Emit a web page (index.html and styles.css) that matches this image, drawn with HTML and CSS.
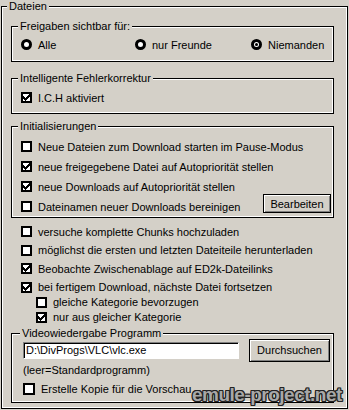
FILE: index.html
```html
<!DOCTYPE html>
<html>
<head>
<meta charset="utf-8">
<link rel="stylesheet" href="styles.css">
</head>
<body>
<div class="outer">
  <div class="legend legend-outer">Dateien</div>

  <div class="group g1">
    <div class="legend">Freigaben sichtbar für:</div>
    <div class="radios">
      <div class="opt"><span class="radio"></span>Alle</div>
      <div class="opt"><span class="radio"></span>nur Freunde</div>
      <div class="opt"><span class="radio on"></span>Niemanden</div>
    </div>
  </div>

  <div class="group g2">
    <div class="legend">Intelligente Fehlerkorrektur</div>
    <div class="row first"><span class="cb on"><svg viewBox="0 0 7 7" width="7" height="7"><polygon points="0,2 1,2 1,3 2,3 2,4 3,4 3,3 4,3 4,2 5,2 5,1 6,1 6,0 7,0 7,3 6,3 6,4 5,4 5,5 4,5 4,6 3,6 3,7 2,7 2,6 1,6 1,5 0,5"/></svg></span>I.C.H aktiviert</div>
  </div>

  <div class="group g3">
    <div class="legend">Initialisierungen</div>
    <div class="rows">
      <div class="row"><span class="cb"></span>Neue Dateien zum Download starten im Pause-Modus</div>
      <div class="row"><span class="cb on"><svg viewBox="0 0 7 7" width="7" height="7"><polygon points="0,2 1,2 1,3 2,3 2,4 3,4 3,3 4,3 4,2 5,2 5,1 6,1 6,0 7,0 7,3 6,3 6,4 5,4 5,5 4,5 4,6 3,6 3,7 2,7 2,6 1,6 1,5 0,5"/></svg></span>neue freigegebene Datei auf Autopriorität stellen</div>
      <div class="row"><span class="cb on"><svg viewBox="0 0 7 7" width="7" height="7"><polygon points="0,2 1,2 1,3 2,3 2,4 3,4 3,3 4,3 4,2 5,2 5,1 6,1 6,0 7,0 7,3 6,3 6,4 5,4 5,5 4,5 4,6 3,6 3,7 2,7 2,6 1,6 1,5 0,5"/></svg></span>neue Downloads auf Autopriorität stellen</div>
      <div class="row"><span class="cb"></span>Dateinamen neuer Downloads bereinigen<span class="btn btn-edit">Bearbeiten</span></div>
    </div>
  </div>

  <div class="free">
    <div class="row"><span class="cb"></span>versuche komplette Chunks hochzuladen</div>
    <div class="row"><span class="cb"></span>möglichst die ersten und letzten Dateiteile herunterladen</div>
    <div class="row"><span class="cb on"><svg viewBox="0 0 7 7" width="7" height="7"><polygon points="0,2 1,2 1,3 2,3 2,4 3,4 3,3 4,3 4,2 5,2 5,1 6,1 6,0 7,0 7,3 6,3 6,4 5,4 5,5 4,5 4,6 3,6 3,7 2,7 2,6 1,6 1,5 0,5"/></svg></span>Beobachte Zwischenablage auf ED2k-Dateilinks</div>
    <div class="row"><span class="cb on"><svg viewBox="0 0 7 7" width="7" height="7"><polygon points="0,2 1,2 1,3 2,3 2,4 3,4 3,3 4,3 4,2 5,2 5,1 6,1 6,0 7,0 7,3 6,3 6,4 5,4 5,5 4,5 4,6 3,6 3,7 2,7 2,6 1,6 1,5 0,5"/></svg></span>bei fertigem Download, nächste Datei fortsetzen</div>
    <div class="row sub"><span class="cb"></span>gleiche Kategorie bevorzugen</div>
    <div class="row sub"><span class="cb on"><svg viewBox="0 0 7 7" width="7" height="7"><polygon points="0,2 1,2 1,3 2,3 2,4 3,4 3,3 4,3 4,2 5,2 5,1 6,1 6,0 7,0 7,3 6,3 6,4 5,4 5,5 4,5 4,6 3,6 3,7 2,7 2,6 1,6 1,5 0,5"/></svg></span>nur aus gleicher Kategorie</div>
  </div>

  <div class="group g4">
    <div class="legend">Videowiedergabe Programm</div>
    <div class="pathrow">
      <div class="field">D:\DivProgs\VLC\vlc.exe</div>
      <span class="btn btn-browse">Durchsuchen</span>
    </div>
    <div class="hint">(leer=Standardprogramm)</div>
    <div class="row last"><span class="cb big"></span>Erstelle Kopie für die Vorschau</div>
  </div>
</div>
<div class="watermark">emule-project.net</div>
</body>
</html>
```

FILE: styles.css
```css
* { box-sizing: border-box; }

html, body {
  margin: 0;
  padding: 0;
  background: #d4d0c8;
}

body {
  width: 349px;
  height: 410px;
  overflow: hidden;
  position: relative;
  font-family: "Liberation Sans", Arial, sans-serif;
  font-size: 11px;
  color: #000;
}

.outer {
  margin: 6px 0 0 1px;
  width: 347px;
  height: 403px;
  border: 1px solid #000;
  box-shadow: inset 0 0 0 1px #fff;
  padding: 0 0 0 9px;
}

.legend {
  width: fit-content;
  height: 13px;
  line-height: 13px;
  margin: -7px 0 0 -3px;
  padding: 0 2px;
  background: #d4d0c8;
  white-space: nowrap;
}

.legend-outer {
  margin-left: -4px;
}

.group {
  width: 323px;
  border: 1px solid #000;
  box-shadow: inset 0 0 0 1px #fff;
  padding: 0 2px 0 9px;
}

.g1 { margin-top: 13px; padding-bottom: 10px; }
.g2 { margin-top: 16px; padding-bottom: 9px; }
.g3 { margin-top: 12px; padding-bottom: 4px; }
.g4 { margin-top: 9px; padding: 0 3px 6px 11px; }

.radios {
  margin-top: 5px;
  height: 13px;
  display: grid;
  grid-template-columns: 114px 116px auto;
}

.opt {
  display: flex;
  align-items: center;
  height: 13px;
  white-space: nowrap;
}

.radio {
  flex: none;
  width: 11px;
  height: 11px;
  border-radius: 50%;
  border: 3px solid #000;
  background: #fff;
  margin-right: 6px;
  display: flex;
  align-items: center;
  justify-content: center;
}

.radio.on::after {
  content: "";
  width: 3px;
  height: 3px;
  border-radius: 50%;
  background: #000;
}

.row {
  display: flex;
  align-items: center;
  height: 13px;
  white-space: nowrap;
}

.row.first { margin-top: 6px; }

.rows {
  margin-top: 7px;
  display: flex;
  flex-direction: column;
  gap: 7px;
}

.cb {
  flex: none;
  width: 11px;
  height: 11px;
  border: 2px solid #000;
  background: #fff;
  margin-right: 6px;
  display: flex;
}

.cb svg {
  display: block;
  fill: #000;
  shape-rendering: crispEdges;
}

.cb.big {
  width: 12px;
  height: 12px;
}

.btn {
  display: flex;
  align-items: center;
  justify-content: center;
  border: 1px solid #000;
  box-shadow: inset 1px 1px 0 #fff, inset -1px -1px 0 #808080;
  background: #d4d0c8;
  white-space: nowrap;
}

.btn-edit {
  margin-left: auto;
  align-self: flex-start;
  margin-top: -6px;
  width: 68px;
  height: 19px;
}

.free {
  margin-top: 7px;
  padding-left: 10px;
}

.free .row + .row { margin-top: 5.67px; }
.free .row.sub { margin-top: 2px; padding-left: 15px; }

.pathrow {
  margin-top: -1px;
  display: flex;
  align-items: center;
}

.field {
  width: 216px;
  height: 17px;
  line-height: 15px;
  padding: 0 2px;
  background: #fff;
  border: 1px solid;
  border-color: #808080 #fff #fff #808080;
  box-shadow: inset 1px 1px 0 #000;
  white-space: nowrap;
}

.btn-browse {
  margin-left: auto;
  width: 81px;
  height: 23px;
}

.hint {
  margin-top: 2px;
  height: 13px;
  line-height: 13px;
}

.row.last { margin-top: 6px; }

.watermark {
  position: absolute;
  left: 192px;
  top: 384px;
  font-size: 19px;
  line-height: 22px;
  font-weight: bold;
  letter-spacing: -0.5px;
  color: #a8a8a8;
  white-space: nowrap;
  text-shadow:
    1px 0 0 #222, -1px 0 0 #222, 0 1px 0 #222, 0 -1px 0 #222,
    1px 1px 0 #222, -1px -1px 0 #222, 1px -1px 0 #222, -1px 1px 0 #222;
}
```
